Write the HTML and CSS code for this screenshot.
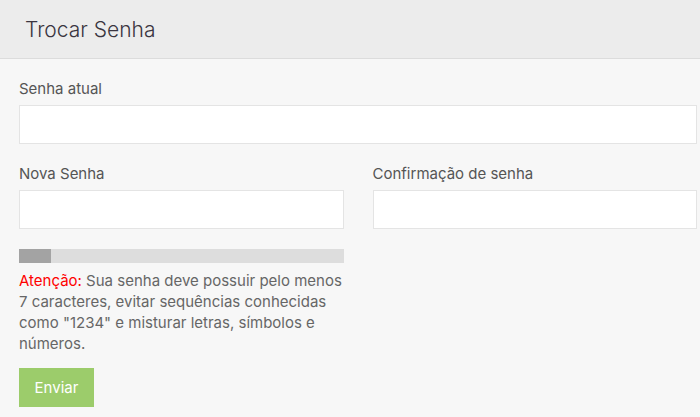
FILE: index.html
```html
<!DOCTYPE html>
<html lang="pt">
<head>
<meta charset="utf-8">
<link rel="stylesheet" href="styles.css">
</head>
<body>
<div class="header"><h1 class="title">Trocar Senha</h1></div>
<form class="form">
  <div class="field">
    <label class="label">Senha atual</label>
    <input class="input" type="password">
  </div>
  <div class="row">
    <div class="col">
      <div class="field">
        <label class="label">Nova Senha</label>
        <input class="input" type="password">
      </div>
      <div class="meter"><div class="meter-fill" style="width:32px"></div></div>
      <p class="hint"><span class="warn">Atenção:</span> Sua senha deve possuir pelo menos 7 caracteres, evitar sequências conhecidas como "1234" e misturar letras, símbolos e números.</p>
      <button class="btn" type="button">Enviar</button>
    </div>
    <div class="col">
      <div class="field">
        <label class="label">Confirmação de senha</label>
        <input class="input" type="password">
      </div>
    </div>
  </div>
</form>
</body>
</html>
```
FILE: styles.css
```css
* { box-sizing: border-box; }
html, body { margin: 0; padding: 0; }
body {
  background: #f7f7f7;
  font-family: Inter, "Noto Sans", sans-serif;
  color: #555;
  font-size: 15px;
}
.header {
  height: 59px;
  background: #ececec;
  border-bottom: 1px solid #dcdcdc;
  display: flex;
  align-items: center;
  padding-left: 25px;
}
.title {
  margin: 0;
  font-size: 21px;
  font-weight: 300;
  color: #3a3540;
}
.form {
  padding: 20px 3px 0 19px;
}
.field {
  display: flex;
  flex-direction: column;
}
.label {
  font-size: 15px;
  line-height: 20px;
  color: #555;
  margin-bottom: 6px;
}
.input {
  height: 39px;
  border: 1px solid #e4e4e4;
  background: #fff;
  width: 100%;
  margin: 0;
  padding: 0 10px;
}
.row {
  display: flex;
  gap: 29px;
  margin-top: 20px;
}
.col { flex: 1; }
.meter {
  margin-top: 20px;
  height: 14px;
  background: #dddddd;
}
.meter-fill { height: 100%; background: #a3a3a3; }
.hint {
  margin: 7px 0 0;
  line-height: 21px;
  color: #666;
  font-size: 15px;
}
.warn { color: #ff0000; }
.btn {
  display: block;
  margin-top: 14px;
  width: 75px;
  height: 39px;
  background: #9ccc6b;
  color: #fff;
  border: none;
  font-family: inherit;
  font-size: 15px;
  padding: 0;
}
```
